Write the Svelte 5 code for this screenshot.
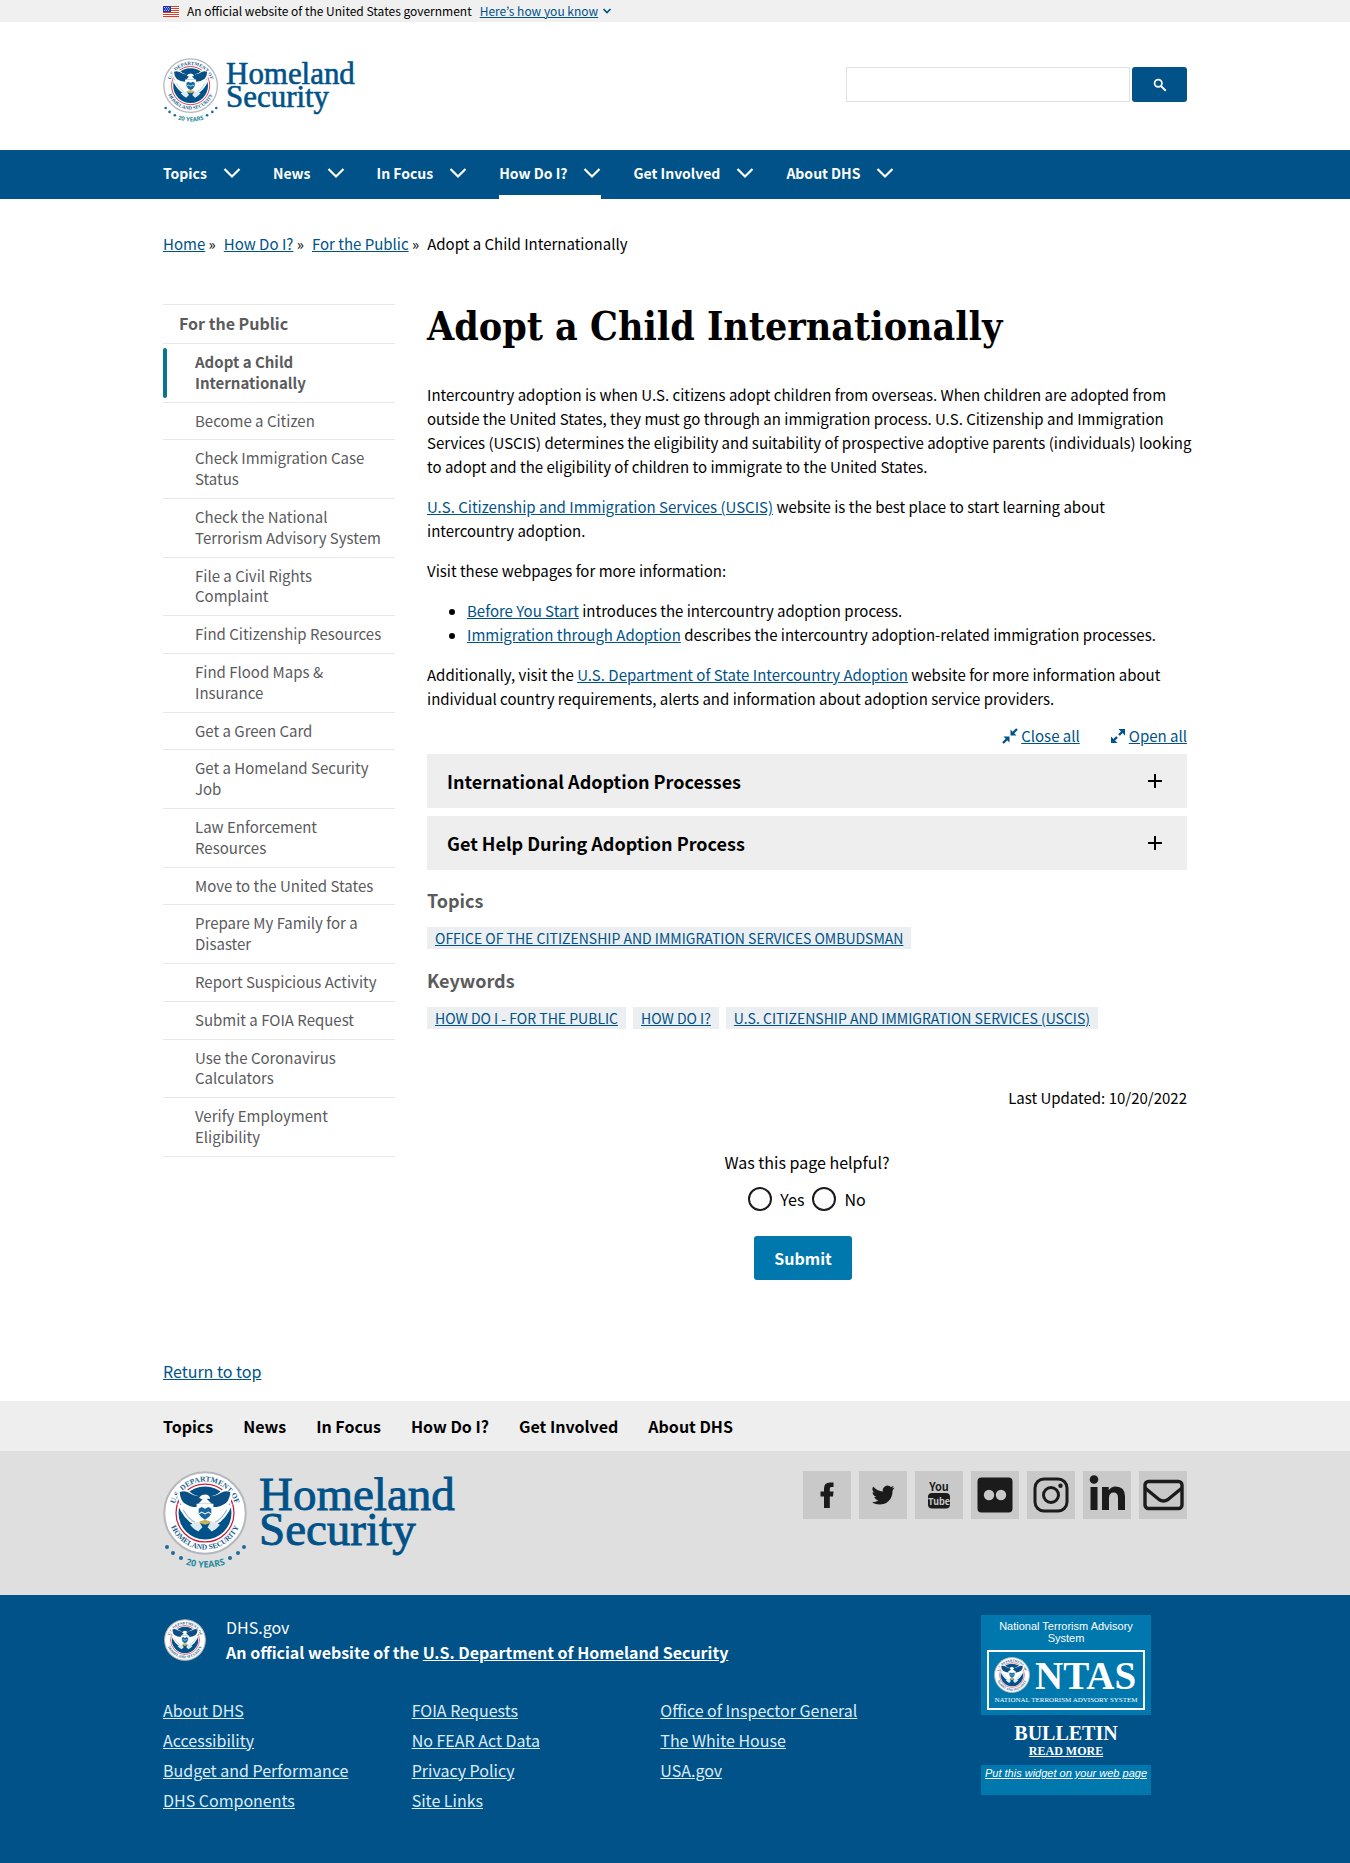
<script>
  const mainNav = ['Topics', 'News', 'In Focus', 'How Do I?', 'Get Involved', 'About DHS'];
  const crumbs = ['Home', 'How Do I?', 'For the Public'];
  const sideLinks = [
    'Adopt a Child Internationally',
    'Become a Citizen',
    'Check Immigration Case Status',
    'Check the National Terrorism Advisory System',
    'File a Civil Rights Complaint',
    'Find Citizenship Resources',
    'Find Flood Maps & Insurance',
    'Get a Green Card',
    'Get a Homeland Security Job',
    'Law Enforcement Resources',
    'Move to the United States',
    'Prepare My Family for a Disaster',
    'Report Suspicious Activity',
    'Submit a FOIA Request',
    'Use the Coronavirus Calculators',
    'Verify Employment Eligibility'
  ];
  const accordions = ['International Adoption Processes', 'Get Help During Adoption Process'];
  const topics = ['Office of the Citizenship and Immigration Services Ombudsman'];
  const keywords = ['How Do I - For the Public', 'How Do I?', 'U.S. Citizenship and Immigration Services (USCIS)'];
  const footerLinks = [
    ['About DHS', 'Accessibility', 'Budget and Performance', 'DHS Components'],
    ['FOIA Requests', 'No FEAR Act Data', 'Privacy Policy', 'Site Links'],
    ['Office of Inspector General', 'The White House', 'USA.gov']
  ];
  const social = ['Facebook', 'Twitter', 'YouTube', 'Flickr', 'Instagram', 'LinkedIn', 'Email'];
  const flagStripes = [0, 2, 4, 6, 8, 10];
  const stars = [[4, 76], [10, 82], [18, 87], [67, 87], [75, 82], [81, 76]];

  let helpful = $state('');
</script>

{#snippet sealArt(id)}
  <circle cx="50" cy="50" r="48.5" fill="#fff" stroke="#b4b8bd" stroke-width="2.4" />
  <path id={id + '-top'} d="M12.6 50 A37.4 37.4 0 0 1 87.4 50" fill="none" />
  <path id={id + '-bottom'} d="M6.500 50 A43.500 43.500 0 0 0 93.500 50" fill="none" />
  <text font-family="Liberation Serif, serif" font-size="9" font-weight="700" fill="#1d5f90" text-anchor="middle">
    <textPath href={'#' + id + '-top'} startOffset="50%">U.S. DEPARTMENT OF</textPath>
  </text>
  <text font-family="Liberation Serif, serif" font-size="9" font-weight="700" fill="#1d5f90" text-anchor="middle">
    <textPath href={'#' + id + '-bottom'} startOffset="50%">HOMELAND SECURITY</textPath>
  </text>
  <circle cx="50" cy="50" r="34.500" fill="#fff" stroke="#c8203c" stroke-width="1.500" />
  <circle cx="50" cy="50" r="31.500" fill="#005288" />
  <path d="M17 25 L28 21 Q34 28 43 30 L57 30 Q66 28 72 21 L83 25 Q83 36 76 43 L60 50 L40 50 L24 43 Q17 36 17 25Z" fill="#fff" />
  <path d="M20 25 Q25 23 29 25 Q35 29 42 30 Q44 23 51 23 Q57 24 58 30 Q65 29 71 25 Q75 23 80 25 Q80 33 75 38 Q68 43 60 43 L56 50 L44 50 L40 43 Q32 43 25 38 Q20 33 20 25Z" fill="#0b4f84" />
  <path d="M17 39 L25 41 L40 47 L47 58 L40 66 Q25 59 17 39Z M83 39 L75 41 L60 47 L53 58 L60 66 Q75 59 83 39Z" fill="#fff" />
  <path d="M24 46 Q30 57 38 61 M76 46 Q70 57 62 61" fill="none" stroke="#8fb6d2" stroke-width="1.200" />
  <path d="M43 32 Q45 28 51 28 Q56 29 56 33 L52 33 L58 39 H42 L47 34Z" fill="#fff" />
  <path d="M40 39 H60 V50 Q58 58 50 62 Q42 58 40 50Z" fill="#fff" />
  <path d="M42.500 45 L46 43 L50 45 L54 43 L57.500 45 V51 Q55 56 50 58 Q45 56 42.500 51Z" fill="#1668a0" />
  <path d="M43 51 L46 49 L50 51 L54 49 L57 51" fill="none" stroke="#fff" stroke-width="1.200" />
  <path d="M41 61 L50 58 L59 61 L50 64Z" fill="#c9b45c" />
  <path d="M32 64 L43 60 L47 67 L42 72 L37 69Z M68 64 L57 60 L53 67 L58 72 L63 69Z" fill="#dbe9f3" />
{/snippet}

{#snippet logo(id)}
  <svg class="logo" viewBox="0 0 292 98" role="img" aria-label="Homeland Security, 20 years">
    <svg x="0" y="0" width="84" height="84" viewBox="0 0 100 100">{@render sealArt(id)}</svg>
    {#each stars as [x, y]}
      <circle cx={x} cy={y} r="2" fill="#1f6c9c" />
    {/each}
    <path id={id + '-years'} d="M18 92 Q42.500 101 67 92" fill="none" />
    <text font-family="Open Sans, sans-serif" font-size="9" font-weight="700" fill="#1f8a9c" text-anchor="middle">
      <textPath href={'#' + id + '-years'} startOffset="50%">20 YEARS</textPath>
    </text>
    <g font-family="Liberation Serif, serif" font-size="47" fill="#005288" stroke="#005288" stroke-width="0.900">
      <text x="96" y="39">Homeland</text>
      <text x="96" y="74">Security</text>
    </g>
  </svg>
{/snippet}

<div class="gov-banner">
  <div class="container gov-inner">
    <svg class="flag" viewBox="0 0 16 11" aria-hidden="true">
      <rect width="16" height="11" fill="#fff" />
      {#each flagStripes as y}
        <rect y={y} width="16" height="1" fill="#db3e1f" />
      {/each}
      <rect width="8" height="6" fill="#1e33b1" />
      <path d="M1 1.500 H7 M2 3 H7 M1 4.500 H7" stroke="#fff" stroke-width="0.700" stroke-dasharray="1 1" />
    </svg>
    <span>An official website of the United States government</span>
    <button type="button" class="gov-button">
      <span>Here’s how you know</span>
      <svg viewBox="0 0 10 10" aria-hidden="true"><path d="M1.500 3 L5 6.500 L8.500 3" fill="none" stroke="#005288" stroke-width="1.700" /></svg>
    </button>
  </div>
</div>

<header class="container header">
  <a href="#home" class="logo-link header-logo">{@render logo('head')}</a>
  <form class="search" onsubmit={(e) => e.preventDefault()}>
    <input type="search" aria-label="Search" />
    <button type="submit" aria-label="Search">
      <svg viewBox="0 0 16 16" aria-hidden="true">
        <circle cx="6" cy="6" r="4.200" fill="none" stroke="#fff" stroke-width="2" />
        <path d="M9 9 L14.500 14.500" stroke="#fff" stroke-width="2.400" />
      </svg>
    </button>
  </form>
</header>

<nav class="main-nav" aria-label="Primary">
  <ul class="container">
    {#each mainNav as item}
      <li>
        <button type="button" class:current={item === 'How Do I?'}>
          <span>{item}</span>
          <svg viewBox="0 0 18 12" aria-hidden="true"><path d="M1.500 2 L9 9.500 L16.500 2" fill="none" stroke="#fff" stroke-width="2.200" /></svg>
        </button>
      </li>
    {/each}
  </ul>
</nav>

<nav class="container breadcrumbs" aria-label="Breadcrumb">
  <ol>
    {#each crumbs as crumb}
      <li><a href="#crumb">{crumb}</a> »</li>
    {/each}
    <li>Adopt a Child Internationally</li>
  </ol>
</nav>

<div class="container layout">
  <nav class="side" aria-label="Section">
    <a href="#public" class="side-title">For the Public</a>
    <ul>
      {#each sideLinks as link, i}
        <li><a href="#section" class:active={i === 0}>{link}</a></li>
      {/each}
    </ul>
  </nav>

  <main>
    <h1>Adopt a Child Internationally</h1>
    <div class="prose">
      <p>Intercountry adoption is when U.S. citizens adopt children from overseas. When children are adopted from outside the United States, they must go through an immigration process. U.S. Citizenship and Immigration Services (USCIS) determines the eligibility and suitability of prospective adoptive parents (individuals) looking to adopt and the eligibility of children to immigrate to the United States.</p>
      <p><a href="#uscis">U.S. Citizenship and Immigration Services (USCIS)</a> website is the best place to start learning about intercountry adoption.</p>
      <p>Visit these webpages for more information:</p>
      <ul>
        <li><a href="#start">Before You Start</a> introduces the intercountry adoption process.</li>
        <li><a href="#adoption">Immigration through Adoption</a> describes the intercountry adoption-related immigration processes.</li>
      </ul>
      <p>Additionally, visit the <a href="#state">U.S. Department of State Intercountry Adoption</a> website for more information about individual country requirements, alerts and information about adoption service providers.</p>
    </div>

    <div class="toggle-all">
      <button type="button">
        <svg viewBox="0 0 16 16" aria-hidden="true">
          <path d="M15 1 L10 6 M1 15 L6 10" stroke="#005288" stroke-width="2.400" />
          <path d="M8.500 1.500 V7.500 H14.500Z M7.500 14.500 V8.500 H1.500Z" fill="#005288" />
        </svg>
        <span>Close all</span>
      </button>
      <button type="button">
        <svg viewBox="0 0 16 16" aria-hidden="true">
          <path d="M12 4 L9 7 M4 12 L7 9" stroke="#005288" stroke-width="2.400" />
          <path d="M8.500 1 H15 V7.500Z M7.500 15 H1 V8.500Z" fill="#005288" />
        </svg>
        <span>Open all</span>
      </button>
    </div>

    <div class="accordions">
      {#each accordions as title}
        <h2>
          <button type="button" aria-expanded="false">
            <span>{title}</span>
            <svg viewBox="0 0 16 16" aria-hidden="true"><path d="M8 1 V15 M1 8 H15" stroke="#000" stroke-width="2" /></svg>
          </button>
        </h2>
      {/each}
    </div>

    <section class="terms">
      <h3>Topics</h3>
      <ul>{#each topics as t}<li><a href="#topic">{t}</a></li>{/each}</ul>
    </section>
    <section class="terms">
      <h3>Keywords</h3>
      <ul>{#each keywords as t}<li><a href="#keyword">{t}</a></li>{/each}</ul>
    </section>

    <p class="updated">Last Updated: 10/20/2022</p>

    <form class="feedback" onsubmit={(e) => e.preventDefault()}>
      <fieldset>
        <legend>Was this page helpful?</legend>
        <div class="radios">
          <label><input type="radio" name="helpful" value="yes" bind:group={helpful} />Yes</label>
          <label><input type="radio" name="helpful" value="no" bind:group={helpful} />No</label>
        </div>
      </fieldset>
      <button type="submit">Submit</button>
    </form>
  </main>
</div>

<div class="container return"><a href="#top">Return to top</a></div>

<footer>
  <nav class="foot-nav" aria-label="Footer">
    <ul class="container">
      {#each mainNav as item}
        <li><a href="#nav">{item}</a></li>
      {/each}
    </ul>
  </nav>

  <div class="foot-brand">
    <div class="container brand-inner">
      <a href="#home" class="logo-link footer-logo">{@render logo('foot')}</a>
      <ul class="social">
        {#each social as name}
          <li>
            <a href="#social" aria-label={name}>
              <svg viewBox="0 0 48 48" fill="#1b1b1b" aria-hidden="true">
                {#if name === 'Facebook'}
                  <path d="M21 37 V25.500 H17.500 V20.500 H21 V17.500 Q21 11.500 27 11.500 H30.500 V16 H28.400 Q26.800 16 26.800 17.800 V20.500 H30.500 L30 25.500 H26.800 V37Z" />
                {:else if name === 'Twitter'}
                  <path d="M35.500 16.500 l-2.600 .9 2-2.500 -3 1.200 a4.700 4.700 0 0 0-8 4.300 c-4-.2-7.300-2-9.700-5 a4.700 4.700 0 0 0 1.500 6.300 l-2.100-.6 a4.700 4.700 0 0 0 3.700 4.700 l-2 .1 a4.700 4.700 0 0 0 4.300 3.200 a9.400 9.400 0 0 1-6.600 2.200 c8 5 20.600 1.500 20.600-11.900 z" />
                {:else if name === 'YouTube'}
                  <text x="24" y="20" font-family="Noto Sans CJK KR, sans-serif" font-size="11" font-weight="700" text-anchor="middle">You</text>
                  <rect x="13" y="22" width="22" height="15.500" rx="4" />
                  <text x="24" y="33.500" font-family="Noto Sans CJK KR, sans-serif" font-size="9" font-weight="700" fill="#c9c9c9" text-anchor="middle">Tube</text>
                {:else if name === 'Flickr'}
                  <rect x="6.500" y="6.500" width="35" height="35" rx="4" />
                  <circle cx="18" cy="24" r="5.200" fill="#c9c9c9" />
                  <circle cx="30" cy="24" r="5.200" fill="#c9c9c9" />
                {:else if name === 'Instagram'}
                  <rect x="8" y="8" width="32" height="32" rx="9" fill="none" stroke="#1b1b1b" stroke-width="3" />
                  <circle cx="24" cy="24" r="7.500" fill="none" stroke="#1b1b1b" stroke-width="3" />
                  <circle cx="33.500" cy="14.800" r="2.200" />
                {:else if name === 'LinkedIn'}
                  <circle cx="11" cy="8.500" r="4.300" />
                  <path d="M7.500 16 H14.500 V39 H7.500Z M19 16 H25.700 V19.200 Q28 15.400 32.700 15.400 Q42 15.400 42 25.500 V39 H35 V27 Q35 21.500 30.800 21.500 Q26 21.500 26 27 V39 H19Z" />
                {:else}
                  <rect x="6" y="10.500" width="37" height="27" rx="3.500" fill="none" stroke="#1b1b1b" stroke-width="3.400" />
                  <path d="M6 17 L20 28.500 Q24.500 31.500 29 28.500 L43 17" fill="none" stroke="#1b1b1b" stroke-width="3.400" />
                {/if}
              </svg>
            </a>
          </li>
        {/each}
      </ul>
    </div>
  </div>

  <div class="foot-main">
    <div class="container foot-grid">
      <div class="foot-left">
        <div class="identity">
          <svg viewBox="0 0 100 100" role="img" aria-label="Seal">{@render sealArt('ident')}</svg>
          <div>
            <p>DHS.gov</p>
            <p><strong>An official website of the <a href="#dhs">U.S. Department of Homeland Security</a></strong></p>
          </div>
        </div>
        <div class="link-columns">
          {#each footerLinks as column}
            <ul>
              {#each column as link}<li><a href="#link">{link}</a></li>{/each}
            </ul>
          {/each}
        </div>
      </div>
      <aside class="widget">
        <div class="widget-top">
          <p>National Terrorism Advisory System</p>
          <svg class="ntas" viewBox="0 0 158 60" role="img" aria-label="NTAS, National Terrorism Advisory System">
            <rect x="1" y="1" width="156" height="58" fill="none" stroke="#fff" stroke-width="2" />
            <svg x="7" y="7" width="36" height="36" viewBox="0 0 100 100">{@render sealArt('ntas')}</svg>
            <text x="48" y="39" font-family="Liberation Serif, serif" font-size="39" font-weight="700" fill="#fff">NTAS</text>
            <text x="79" y="52" font-family="Liberation Serif, serif" font-size="7" fill="#fff" text-anchor="middle">NATIONAL TERRORISM ADVISORY SYSTEM</text>
          </svg>
        </div>
        <div class="bulletin">
          <strong>BULLETIN</strong>
          <a href="#bulletin">READ MORE</a>
        </div>
        <div class="widget-bottom"><a href="#widget">Put this widget on your web page</a></div>
      </aside>
    </div>
  </div>
</footer>

<style>
  :global(body) {
    margin: 0;
    background: #fff;
    color: #000;
    font-family: 'Noto Sans CJK KR', 'Open Sans', sans-serif;
    font-size: 15px;
    line-height: 24px;
  }
  ul, ol { list-style: none; margin: 0; padding: 0; }
  p { margin: 0 0 16px; }
  a { color: #005288; }
  button { font: inherit; border: 0; padding: 0; background: none; cursor: pointer; }
  svg { display: block; }

  .container { box-sizing: border-box; width: 100%; max-width: 1056px; margin: 0 auto; padding: 0 16px; }

  .gov-banner { background: #f0f0f0; font-size: 12px; line-height: 22px; }
  .gov-inner { display: flex; align-items: center; gap: 8px; }
  .flag { width: 16px; height: 11px; }
  .gov-button { display: flex; align-items: center; gap: 4px; color: #005288; }
  .gov-button span { text-decoration: underline; }
  .gov-button svg { width: 10px; height: 10px; }

  .header { display: flex; justify-content: space-between; align-items: flex-start; padding-top: 36px; padding-bottom: 28px; }
  .logo-link { display: block; }
  .logo { width: 100%; height: auto; overflow: visible; }
  .header-logo { width: 192px; height: 64px; }
  .footer-logo { width: 292px; height: 98px; }
  .search { display: flex; gap: 2px; padding-top: 9px; }
  .search input { box-sizing: border-box; width: 284px; height: 35px; border: 1px solid #dfe1e5; padding: 0 8px; font: inherit; background: #fff; }
  .search button { width: 55px; height: 35px; border-radius: 3px; background: #005288; display: grid; place-items: center; }
  .search svg { width: 14px; height: 14px; }

  .main-nav { background: #005288; }
  .main-nav ul { display: flex; gap: 32px; }
  .main-nav button { display: flex; align-items: center; gap: 16px; height: 49px; box-sizing: border-box; border-bottom: 4px solid transparent; color: #fff; font-weight: 700; font-size: 14px; }
  .main-nav .current { border-bottom-color: #fff; }
  .main-nav svg { width: 18px; height: 12px; }

  .breadcrumbs { padding-top: 33px; }
  .breadcrumbs ol { display: flex; gap: 8px; }

  .layout { display: grid; grid-template-columns: 232px 1fr; gap: 32px; padding-top: 48px; align-items: start; }
  .side { border-top: 1px solid #e8e8e9; line-height: 21px; }
  .side a { display: block; color: #5a5b5d; font-size: 15px; text-decoration: none; }
  .side .side-title { padding: 8px 16px 9px; font-size: 16px; font-weight: 700; }
  .side ul { font-size: 16px; line-height: 1.3em; }
  .side li { border-top: 1px solid #e8e8e9; }
  .side li:last-child { border-bottom: 1px solid #e8e8e9; }
  .side li a { position: relative; padding: 8px 12px 8px 32px; }
  .side .active { font-weight: 700; }
  .side .active::before { content: ''; position: absolute; left: 0; top: 4px; bottom: 4px; width: 4px; border-radius: 4px; background: #0b7394; }

  h1 { margin: 0 0 35px; font-family: 'DejaVu Serif Condensed', 'DejaVu Serif', serif; font-size: 39px; line-height: 44px; font-weight: 700; }
  .prose { margin-right: -8px; }
  .prose ul { list-style: disc; padding-left: 40px; margin-bottom: 16px; }

  .toggle-all { display: flex; justify-content: flex-end; gap: 30px; margin: -3px 0 6px; }
  .toggle-all button { display: flex; align-items: center; gap: 3px; color: #005288; }
  .toggle-all span { text-decoration: underline; }
  .toggle-all svg { width: 16px; height: 16px; }

  .accordions { display: grid; gap: 8px; margin-bottom: 18px; }
  .accordions h2 { margin: 0; font-size: 18px; }
  .accordions button { width: 100%; height: 54px; display: flex; justify-content: space-between; align-items: center; padding: 0 24px 0 20px; background: #eee; font-weight: 700; text-align: left; }
  .accordions svg { width: 16px; height: 16px; }

  .terms h3 { margin: 0 0 15px; color: #5a5b5d; font-size: 18px; line-height: 24px; }
  .terms ul { display: flex; flex-wrap: wrap; gap: 7px; margin-bottom: 19px; }
  .terms a { display: block; padding: 0 8px; background: #eceff1; font-size: 14px; line-height: 22px; text-transform: uppercase; }

  .updated { margin: 57px 0 40px; text-align: right; }
  .feedback { display: flex; flex-direction: column; align-items: center; }
  .feedback fieldset { border: 0; margin: 0 0 25px; padding: 0; min-width: 0; }
  .feedback legend { padding: 0; font-size: 16px; }
  .radios { display: flex; justify-content: center; gap: 8px; padding-top: 13px; font-size: 16px; }
  .radios label { display: flex; align-items: center; gap: 8px; }
  .radios input { appearance: none; width: 24px; height: 24px; margin: 0; border: 2px solid #1b1b1b; border-radius: 50%; }
  .radios input:checked { background: #0078ae; box-shadow: inset 0 0 0 4px #fff; }
  .feedback button { height: 44px; margin-right: 8px; padding: 0 20px; border-radius: 3px; background: #0078ae; color: #fff; font-size: 16px; font-weight: 700; }

  .return { padding-top: 79px; padding-bottom: 18px; font-size: 16px; }

  .foot-nav { background: #eee; }
  .foot-nav ul { display: flex; gap: 30px; }
  .foot-nav a { color: #000; text-decoration: none; font-size: 16px; line-height: 50px; font-weight: 700; }

  .foot-brand { background: #dfdfdf; }
  .brand-inner { display: flex; justify-content: space-between; padding-top: 20px; padding-bottom: 26px; }
  .social { display: flex; gap: 8px; }
  .social a { display: block; background: #c9c9c9; }
  .social svg { width: 48px; height: 48px; }

  .foot-main { background: #005288; color: #fff; font-size: 16px; }
  .foot-main a { color: #dcecf7; }
  .foot-grid { display: grid; grid-template-columns: 1fr 206px; gap: 72px; padding-top: 20px; padding-bottom: 48px; }
  .identity { display: flex; align-items: center; gap: 20px; margin-bottom: 30px; }
  .identity svg { width: 42px; height: 42px; margin-left: 1px; }
  .identity p { margin: 0; line-height: 25px; }
  .identity a { color: #fff; }
  .link-columns { display: grid; grid-template-columns: repeat(3, 1fr); }
  .link-columns li { line-height: 30px; }

  .widget { width: 170px; font-family: 'Liberation Sans', sans-serif; font-size: 11px; line-height: 12px; text-align: center; }
  .widget-top { background: #0078ae; padding: 5px 6px; }
  .widget-top p { margin: 0 0 6px; }
  .ntas { width: 100%; height: auto; }
  .bulletin { display: flex; flex-direction: column; align-items: center; padding: 8px 0 5px; font-family: 'Liberation Serif', serif; font-weight: 700; }
  .bulletin strong { font-size: 20px; line-height: 20px; }
  .bulletin a { font-size: 12px; line-height: 17px; color: #fff; }
  .widget-bottom { background: #0078ae; padding: 2px 0 16px; font-style: italic; white-space: nowrap; }
  .widget-bottom a { color: #fff; }
</style>
